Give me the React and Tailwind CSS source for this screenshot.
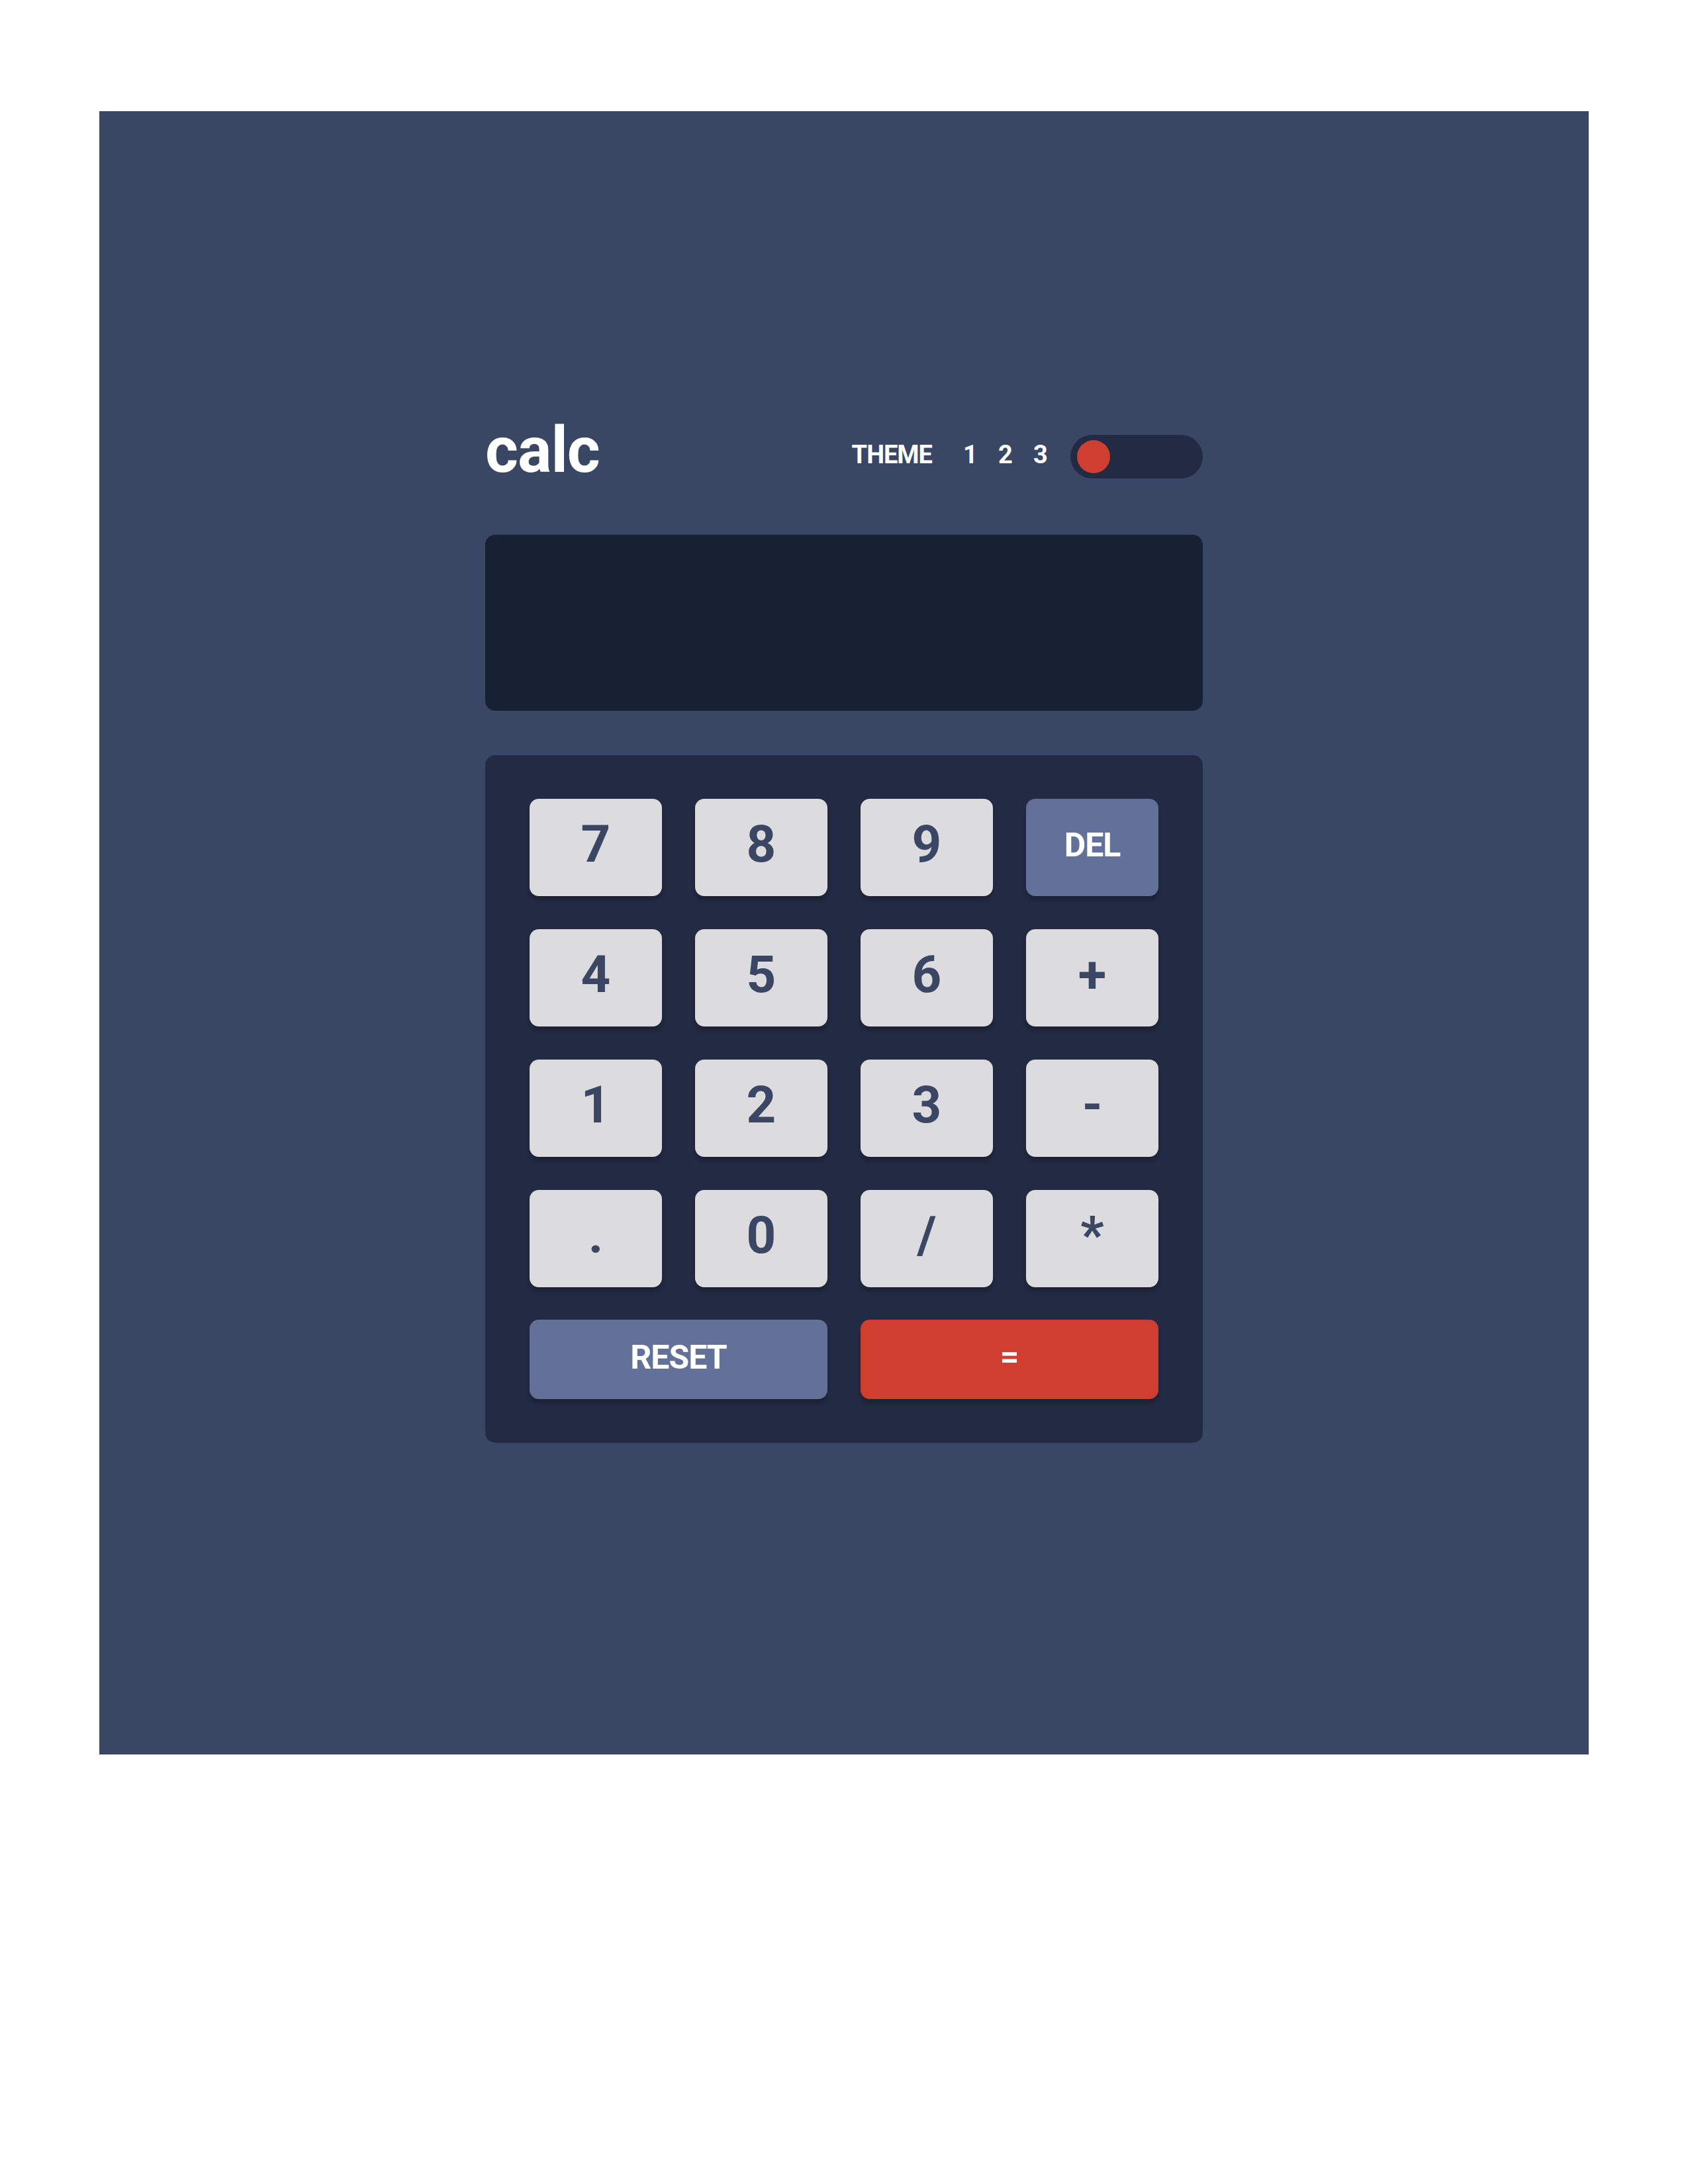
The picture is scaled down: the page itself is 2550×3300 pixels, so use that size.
const keys = ['7', '8', '9', 'DEL', '4', '5', '6', '+', '1', '2', '3', '-', '.', '0', '/', '*'];

function Key({ label }) {
  const isDel = label === 'DEL';
  return (
    <button
      className={`h-[147px] rounded-[14px] flex items-center justify-center font-bold leading-none shadow-[0_7px_6px_rgba(0,0,0,0.2)] ${
        isDel
          ? 'bg-[#637097] text-white text-[50px] pb-[7px] tracking-[-1px]'
          : 'bg-[#dcdcde] text-[#3b4664] text-[78px] pb-[10px]'
      }`}
    >
      {label}
    </button>
  );
}

export default function App() {
  return (
    <div className="w-[2550px] h-[3300px] bg-white pt-[168px] pl-[150px] font-['Roboto',sans-serif]">
      <div className="w-[2250px] h-[2483px] bg-[#3a4764] pt-[489px]">
        <div className="w-[1084px] mx-auto">
          {/* header */}
          <div className="h-[66px] flex items-center">
            <span className="text-white font-bold text-[96px] leading-none tracking-[-1px] mb-[20px]">calc</span>
            <div className="ml-auto flex items-center">
              <span className="text-white font-bold text-[38px] leading-none tracking-[-1px] mb-[6px]">THEME</span>
              <div className="flex gap-[31px] ml-[47px] mb-[6px]">
                <span className="w-[22px] text-center text-white font-bold text-[38px] leading-none">1</span>
                <span className="w-[22px] text-center text-white font-bold text-[38px] leading-none">2</span>
                <span className="w-[22px] text-center text-white font-bold text-[38px] leading-none">3</span>
              </div>
              <div className="ml-[34px] w-[200px] h-[66px] rounded-full bg-[#232a43] flex items-center px-[10px]">
                <div className="w-[50px] h-[50px] rounded-full bg-[#cf3f2f]" />
              </div>
            </div>
          </div>

          {/* screen */}
          <div className="mt-[85px] h-[266px] rounded-[15px] bg-[#182033]" />

          {/* keypad */}
          <div className="mt-[67px] rounded-[15px] bg-[#232a43] px-[67px] pt-[66px] pb-[66px]">
            <div className="grid grid-cols-4 gap-[50px]">
              {keys.map((k) => (
                <Key key={k} label={k} />
              ))}
            </div>
            <div className="grid grid-cols-2 gap-[50px] mt-[49px]">
              <button className="h-[120px] rounded-[14px] bg-[#637097] text-white font-bold text-[50px] leading-none tracking-[-1px] pb-[6px] flex items-center justify-center shadow-[0_7px_6px_rgba(0,0,0,0.2)]">
                RESET
              </button>
              <button className="h-[120px] rounded-[14px] bg-[#cf3f2f] text-white font-bold text-[50px] leading-none pb-[8px] flex items-center justify-center shadow-[0_7px_6px_rgba(0,0,0,0.2)]">
                =
              </button>
            </div>
          </div>
        </div>
      </div>
    </div>
  );
}
